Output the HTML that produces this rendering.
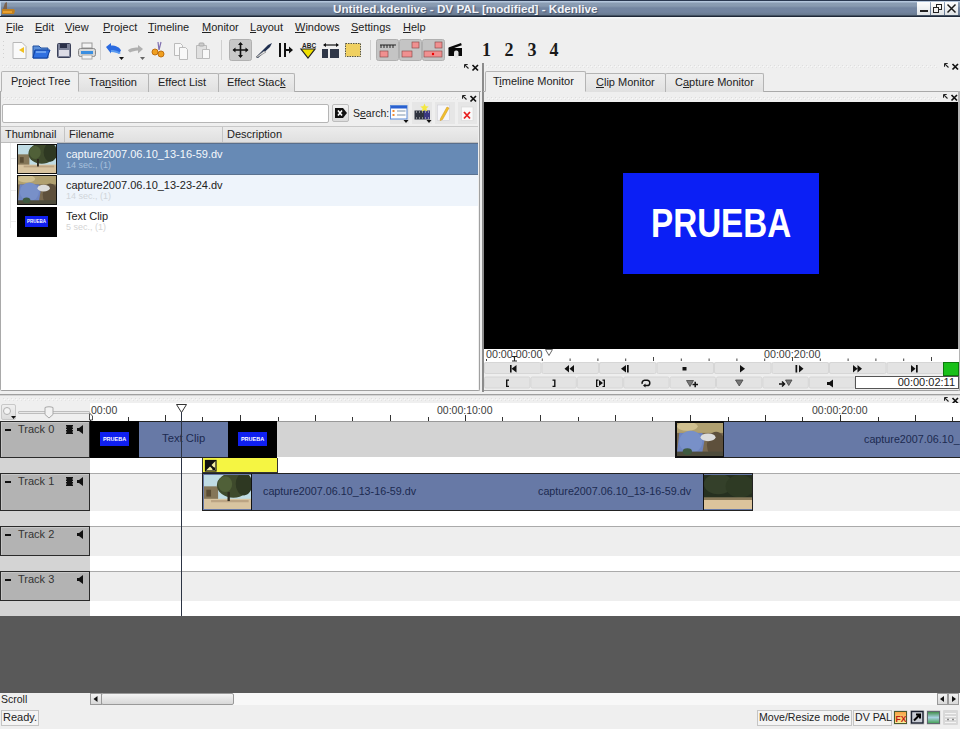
<!DOCTYPE html>
<html><head><meta charset="utf-8">
<style>
*{margin:0;padding:0;box-sizing:border-box}
html,body{width:960px;height:729px;overflow:hidden;background:#efefef;font-family:"Liberation Sans",sans-serif;font-size:11px;color:#222}
.a{position:absolute}
.t{position:absolute;white-space:nowrap;line-height:1}
#title{left:0;top:0;width:960px;height:17px;background:linear-gradient(#2a3850 0,#2a3850 1px,#b4c6dc 1px,#b4c6dc 2px,#8b9db3 3px,#889ab0 6px,#7385a0 8px,#7284a0 12px,#687a8e 15px,#1e2838 16px)}
.wb{position:absolute;top:2px;width:13px;height:13px;background:linear-gradient(#fdfdfd,#dfe3e6);}
.dots{position:absolute;height:5px;background-image:linear-gradient(90deg,#dedede 1px,transparent 1px),linear-gradient(90deg,#fafafa 1px,transparent 1px),linear-gradient(90deg,#e2e2e2 1px,transparent 1px);background-size:4px 1px,4px 1px,4px 1px;background-position:0 1px,1px 2px,2px 3px;background-repeat:repeat-x}
.tab{position:absolute;border:1px solid #b4b4b4;border-bottom:none;border-radius:2px 2px 0 0;background:linear-gradient(#eeeeee,#e0e0e0)}
.tabsel{background:#efefef}
.tbtn{position:absolute;border:1px solid #bdbdbd;border-radius:2px;background:linear-gradient(#f3f3f3,#dcdcdc)}
.tick{position:absolute;width:1px;background:#444}
</style></head><body>
<svg width="0" height="0" style="position:absolute">
<defs>
<symbol id="th1" viewBox="0 0 40 30" preserveAspectRatio="none">
<rect width="40" height="30" fill="#c0dce4"/>
<rect x="0" y="10" width="12" height="12" fill="#857658"/>
<rect x="2" y="13" width="4" height="6" fill="#5a4c34"/>
<ellipse cx="25" cy="9" rx="14" ry="11" fill="#3e4a2c"/>
<ellipse cx="18" cy="8" rx="6" ry="7" fill="#506038"/>
<ellipse cx="34" cy="8" rx="7" ry="10" fill="#2e3822"/>
<rect x="0" y="21" width="40" height="9" fill="#d8c4a0"/>
<path d="M6 22h32v2h-32z" fill="#a89070" opacity="0.6"/>
<rect x="20" y="15" width="2" height="8" fill="#2e2a1e"/>
</symbol>
<symbol id="th2" viewBox="0 0 40 30" preserveAspectRatio="none">
<rect width="40" height="30" fill="#7a6a50"/>
<rect x="0" y="0" width="40" height="9" fill="#b0a070"/>
<ellipse cx="9" cy="3" rx="9" ry="4" fill="#d0c090"/>
<ellipse cx="34" cy="20" rx="8" ry="12" fill="#5e503c"/>
<path d="M2 9h20l2 6-2 12h-22z" fill="#6e84c0"/>
<ellipse cx="12" cy="17" rx="10" ry="10" fill="#7890c8"/>
<ellipse cx="27" cy="13" rx="6.5" ry="3.5" fill="#dcdcdc"/>
<rect x="0" y="26" width="40" height="4" fill="#4e4c3c"/>
<ellipse cx="9" cy="26" rx="4" ry="3" fill="#3e5a40"/>
</symbol>
<symbol id="th3" viewBox="0 0 40 30" preserveAspectRatio="none">
<rect width="40" height="30" fill="#263020"/>
<ellipse cx="12" cy="8" rx="12" ry="9" fill="#34402a"/>
<ellipse cx="30" cy="10" rx="12" ry="10" fill="#2e3a24"/>
<rect x="0" y="20" width="40" height="10" fill="#dcc49c"/>
<path d="M0 20h40v2h-40z" fill="#8a7a5a"/>
</symbol>
</defs></svg>
<!-- title bar -->
<div id="title" class="a"></div>
<div class="a" style="left:0;top:1px;width:1px;height:15px;background:#b8d0e8"></div>
<svg class="a" style="left:0;top:0" width="18" height="17"><path d="M3 9l2-6 2-1v7z" fill="#7a5a40" opacity="0.85"/><path d="M2 9h7l5 0 1 2-1 3h-12z" fill="#c08020"/><path d="M3 12h9" stroke="#e8a030" stroke-width="2"/></svg>
<div class="t" style="left:333px;top:3px;color:#f2f4f8;font-weight:bold;font-size:11.7px;text-shadow:1px 1px 1px rgba(20,30,50,0.45)">Untitled.kdenlive - DV PAL [modified] - Kdenlive</div>
<div class="wb" style="left:917px"><div class="a" style="left:3px;top:8px;width:8px;height:2px;background:#222"></div></div>
<div class="wb" style="left:931px"><div class="a" style="left:5px;top:2px;width:6px;height:6px;border:1px solid #222"></div><div class="a" style="left:2px;top:5px;width:6px;height:6px;border:1px solid #222;background:#f0f0f0"></div></div>
<div class="wb" style="left:945px"></div><svg class="a" style="left:945px;top:2px" width="13" height="13"><path d="M2.5 2.5l8 8M10.5 2.5l-8 8" stroke="#1a1a1a" stroke-width="1.5"/></svg>

<div class="a" style="left:0;top:17px;width:960px;height:2px;background:linear-gradient(#f8fafc,#f0f1f2)"></div>
<!-- menu -->
<div class="t" style="left:6px;top:22px;font-size:11px"><u>F</u>ile</div>
<div class="t" style="left:35px;top:22px"><u>E</u>dit</div>
<div class="t" style="left:65px;top:22px"><u>V</u>iew</div>
<div class="t" style="left:103px;top:22px"><u>P</u>roject</div>
<div class="t" style="left:148px;top:22px"><u>T</u>imeline</div>
<div class="t" style="left:202px;top:22px"><u>M</u>onitor</div>
<div class="t" style="left:250px;top:22px"><u>L</u>ayout</div>
<div class="t" style="left:295px;top:22px"><u>W</u>indows</div>
<div class="t" style="left:351px;top:22px"><u>S</u>ettings</div>
<div class="t" style="left:403px;top:22px"><u>H</u>elp</div>

<!-- toolbar placeholder -->
<svg class="a" style="left:0;top:36px" width="580" height="28" viewBox="0 36 580 28">
<!-- handle dots -->
<g fill="#d0d0d0"><rect x="3" y="41" width="1" height="1"/><rect x="3" y="45" width="1" height="1"/><rect x="3" y="49" width="1" height="1"/><rect x="3" y="53" width="1" height="1"/><rect x="3" y="57" width="1" height="1"/></g>
<!-- new -->
<path d="M13 42.5h9l4 4v12h-13z" fill="#fafafa" stroke="#b8b8b8"/>
<path d="M19 50l5-3v6z" fill="#f0c020"/>
<!-- open -->
<path d="M33 46h6l2 2h7v10h-15z" fill="#5b8fd8" stroke="#2050a0"/>
<path d="M35 50h15l-3 8h-14z" fill="#3070e0" stroke="#1040a0"/>
<path d="M36 52h10" stroke="#a8d0ff"/>
<!-- save -->
<rect x="57.5" y="43.5" width="13" height="14" rx="1" fill="#7c8298" stroke="#3a4058"/>
<rect x="60" y="44" width="7" height="4" fill="#2a3048"/>
<rect x="59" y="50" width="10" height="6" fill="#dcdce6"/>
<!-- print -->
<rect x="82" y="43" width="10" height="5" fill="#f4f4f4" stroke="#999"/>
<rect x="78.5" y="48.5" width="17" height="8" rx="2" fill="#d8d8d8" stroke="#888"/>
<rect x="81" y="51" width="12" height="3" fill="#3a8ee0"/>
<rect x="82" y="55" width="10" height="4" fill="#f4f4f4" stroke="#aaa"/>
<!-- sep -->
<rect x="100" y="40" width="1" height="20" fill="#cfcfcf"/>
<!-- undo -->
<path d="M106 47l5-4v2.5c5 0 9 2 10 5l-2 3c-2-2-5-3-8-3v3z" fill="#2a6ae0"/>
<path d="M111 50c4 0 7 1 10 3l-2 1c-2-1-4-2-8-2z" fill="#5a9af0"/>
<path d="M119 57h5l-2.5 3z" fill="#111"/>
<!-- redo -->
<path d="M143 49l-5-4v2.5c-5 0-9 1-10 3l2 2c2-1 5-2 8-2v3z" fill="#b0b0b0"/>
<path d="M140 57h5l-2.5 3z" fill="#666"/>
<!-- cut -->
<path d="M158 42l1 8M161 42l-2 8" stroke="#8070b0" stroke-width="1.2"/>
<circle cx="155" cy="52" r="3" fill="#f0a020" stroke="#c07010"/>
<circle cx="161" cy="54" r="3" fill="#f0a020" stroke="#c07010"/>
<!-- copy -->
<path d="M174.5 43.5h6l2 2v10h-8z" fill="#f8f8f8" stroke="#bbb"/>
<path d="M179.5 47.5h6l2 2v10h-8z" fill="#f8f8f8" stroke="#bbb"/>
<!-- paste -->
<path d="M196.5 45.5h10v13h-10z" fill="#e0e0e0" stroke="#bbb"/>
<rect x="199" y="43" width="5" height="3" rx="1" fill="#ccc" stroke="#aaa"/>
<path d="M202.5 49.5h7v9h-7z" fill="#f8f8f8" stroke="#bbb"/>
<!-- sep -->
<rect x="221" y="40" width="1" height="20" fill="#cfcfcf"/>
<!-- move pressed -->
<rect x="229.5" y="39.5" width="22" height="21" rx="2" fill="#c8c8c8" stroke="#b0b0b0"/>
<path d="M240.5 43v14M233.5 50h14" stroke="#111" stroke-width="1.6"/>
<path d="M240.5 42l-2.5 3h5zM240.5 58l-2.5-3h5zM232.5 50l3-2.5v5zM248.5 50l-3-2.5v5z" fill="#111"/>
<!-- razor -->
<path d="M256 57l12-12 4-2-2 4-12 11z" fill="#203050"/>
<path d="M256 57l8-6 2 1-8 5z" fill="#e8e8e8" stroke="#666" stroke-width="0.5"/>
<!-- split -->
<rect x="279" y="43" width="2" height="14" fill="#111"/>
<rect x="284" y="43" width="2" height="14" fill="#111"/>
<path d="M286 49h3v-2.5l4 3.5-4 3.5v-2.5h-3z" fill="#111"/>
<!-- abc marker -->
<text x="302" y="47.5" font-family="Liberation Sans" font-weight="bold" font-size="6.5" fill="#222">ABC</text>
<path d="M301 49h14l-7 9z" fill="#f0e000" stroke="#222" stroke-width="1.2"/>
<!-- spacer -->
<path d="M324 45h14" stroke="#111" stroke-width="1.2"/>
<path d="M323 45l3-2v4zM339 45l-3-2v4z" fill="#111"/>
<rect x="322" y="49" width="6" height="9" fill="#303848"/>
<rect x="330" y="49" width="9" height="9" fill="#303848"/>
<!-- rect -->
<rect x="345.5" y="43.5" width="15" height="13" fill="#f0d060" stroke="#554" stroke-dasharray="1.5 1"/>
<!-- sep -->
<rect x="370" y="40" width="1" height="20" fill="#cfcfcf"/>
<!-- pressed 3 -->
<rect x="376.5" y="39.5" width="22" height="21" rx="2" fill="#c4c4c4" stroke="#b0b0b0"/>
<rect x="399.5" y="39.5" width="22" height="21" rx="2" fill="#c4c4c4" stroke="#b0b0b0"/>
<rect x="422.5" y="39.5" width="22" height="21" rx="2" fill="#c4c4c4" stroke="#b0b0b0"/>
<path d="M380 45h16" stroke="#222" stroke-width="1"/>
<path d="M381 45v3M384 45v3M387 45v3M390 45v3M393 45v3" stroke="#222"/>
<rect x="380" y="51" width="8" height="6" fill="#f09090" stroke="#804040" stroke-width="0.6"/>
<rect x="412" y="42" width="7" height="6" fill="#f09090" stroke="#804040" stroke-width="0.6"/>
<rect x="402" y="51" width="10" height="6" fill="#f09090" stroke="#804040" stroke-width="0.6"/>
<rect x="435" y="42" width="7" height="6" fill="#f09090" stroke="#804040" stroke-width="0.6"/>
<rect x="424" y="51" width="18" height="6" fill="#f09090" stroke="#804040" stroke-width="0.6"/>
<circle cx="433" cy="54" r="1.2" fill="#e00"/>
<!-- black icon -->
<path d="M448.5 47.5l12.5-4.5 0.8 2.2-12.5 4.5z" fill="#0a0a0a"/>
<rect x="448.5" y="48" width="13.5" height="8" fill="#0a0a0a"/>
<rect x="454" y="50.5" width="4.5" height="7.5" rx="2" fill="#e4e4e4"/>
<!-- 1234 -->
<g font-family="Liberation Serif" font-size="18" font-weight="bold" fill="#1a1a1a">
<text x="482" y="56">1</text><text x="504.5" y="56">2</text><text x="527.5" y="56">3</text><text x="549.5" y="56">4</text></g>
</svg>

<!-- left dock -->
<div class="dots" style="left:2px;top:64px;width:455px"></div>
<svg class="a" style="left:464px;top:64px" width="16" height="8"><path d="M0.5 0.5h3.2M0.5 0.5v3.2M0.8 0.8l3.7 3.7" stroke="#222" stroke-width="1.1" fill="none"/><path d="M8.5 1l5.5 5.5M14 1l-5.5 5.5" stroke="#111" stroke-width="1.7"/></svg>

<div class="a" style="left:0;top:91px;width:481px;height:1px;background:#a9a9a9"></div>
<div class="tab" style="left:78px;top:73px;width:71px;height:19px"></div>
<div class="tab" style="left:148px;top:73px;width:71px;height:19px"></div>
<div class="tab" style="left:218px;top:73px;width:77px;height:19px"></div>
<div class="tab tabsel" style="left:1px;top:71px;width:78px;height:21px;border-bottom:1px solid #efefef"></div>
<div class="t" style="left:11px;top:76px">P<u>r</u>oject Tree</div>
<div class="t" style="left:89px;top:77px">Tra<u>n</u>sition</div>
<div class="t" style="left:158px;top:77px">Effect List</div>
<div class="t" style="left:227px;top:77px">Effect Stac<u>k</u></div>


<!-- left panel content -->
<div class="a" style="left:0;top:92px;width:480px;height:299px;background:#efefef;border-left:1px solid #a9a9a9;border-right:1px solid #a0a0a0;border-bottom:1px solid #a0a0a0;border-radius:0 0 2px 2px"></div>
<div class="dots" style="left:3px;top:96px;width:455px"></div>
<svg class="a" style="left:462px;top:95px" width="16" height="8"><path d="M0.5 0.5h3.2M0.5 0.5v3.2M0.8 0.8l3.7 3.7" stroke="#222" stroke-width="1.1" fill="none"/><path d="M8.5 1l5.5 5.5M14 1l-5.5 5.5" stroke="#111" stroke-width="1.7"/></svg>
<div class="a" style="left:2px;top:104px;width:327px;height:19px;background:#fff;border:1px solid #b5b5b5;border-radius:2px"></div>
<div class="tbtn" style="left:332px;top:104px;width:17px;height:18px"></div>
<svg class="a" style="left:333px;top:106px" width="16" height="14"><path d="M2 2h8l4 5-4 5h-8z" fill="#111"/><path d="M5 4.5l4 5M9 4.5l-4 5" stroke="#fff" stroke-width="1.6"/></svg>
<div class="t" style="left:353px;top:108px;font-size:10.5px">S<u>e</u>arch:</div>
<svg class="a" style="left:388px;top:101px" width="90" height="24" viewBox="388 101 90 24">
<rect x="390" y="102" width="19" height="22" fill="#e6e6e6"/><rect x="412" y="102" width="20" height="22" fill="#e6e6e6"/><rect x="435" y="102" width="20" height="22" fill="#e6e6e6"/><rect x="458" y="102" width="19" height="22" fill="#e6e6e6"/>
<rect x="390.5" y="105.5" width="16.5" height="13.5" fill="#fdfdfd" stroke="#5a8ad8"/>
<rect x="391" y="106" width="16" height="2.5" fill="#2a60d0"/>
<rect x="392.5" y="110" width="2" height="2" fill="#f08a30"/><rect x="392.5" y="114" width="2" height="2" fill="#f08a30"/>
<path d="M397 111h8.5M397 115h8.5" stroke="#a8b8c8" stroke-width="1.6"/>
<path d="M403.5 120h5l-2.5 3z" fill="#111"/>
<rect x="414.5" y="110.5" width="15.5" height="9" fill="#303440"/>
<rect x="424" y="111" width="6" height="8" fill="#3a3880"/>
<path d="M416 112h1M419 112h1M422 112h1M425 112h1M428 112h1M416 118h1M419 118h1M422 118h1M425 118h1M428 118h1" stroke="#d8d8d8"/>
<path d="M424.5 103.5l1.2 2.8 3 .2-2.3 2 .8 3-2.7-1.6-2.7 1.6.8-3-2.3-2 3-.2z" fill="#f4e840"/>
<path d="M426.5 120h5l-2.5 3z" fill="#111"/>
<rect x="437.5" y="105" width="12" height="15.5" fill="#f6f6fa" stroke="#d0d0d8" stroke-width="0.6"/>
<path d="M440.5 118.5l6.5-11.5 2 1.1-6.5 11.5-2.3 1z" fill="#f0c030" stroke="#d09010" stroke-width="0.5"/>
<rect x="461.5" y="107" width="11.5" height="13.5" fill="#fafafa" stroke="#d8d8d8" stroke-width="0.6"/>
<path d="M464 112l6 6.5M470 112l-6 6.5" stroke="#e82020" stroke-width="1.8"/>
</svg>
<!-- header -->
<div class="a" style="left:1px;top:126px;width:477px;height:17px;background:linear-gradient(#ececec,#e0e0e0);border-top:1px solid #c8c8c8;border-bottom:1px solid #bdbdbd"></div>
<div class="a" style="left:64px;top:127px;width:1px;height:15px;background:#c4c4c4"></div>
<div class="a" style="left:222px;top:127px;width:1px;height:15px;background:#c4c4c4"></div>
<div class="t" style="left:5px;top:129px">Thumbnail</div>
<div class="t" style="left:69px;top:129px">Filename</div>
<div class="t" style="left:227px;top:129px">Description</div>
<!-- list -->
<div class="a" style="left:1px;top:143px;width:477px;height:247px;background:#fff"></div>
<div class="a" style="left:57px;top:143px;width:421px;height:32px;background:#678ab5;border-top:1px solid #5a6f8c;border-bottom:1px solid #5a7290"></div>
<div class="a" style="left:57px;top:175px;width:421px;height:31px;background:#eef4fb"></div>
<div class="a" style="left:10px;top:143px;width:1px;height:85px;background:#ececec"></div><div class="a" style="left:10px;top:158px;width:6px;height:1px;background:#ececec"></div><div class="a" style="left:10px;top:190px;width:6px;height:1px;background:#ececec"></div><div class="a" style="left:10px;top:221px;width:6px;height:1px;background:#ececec"></div>
<div class="a" style="left:17px;top:144px;width:40px;height:30px;background:#111"></div>
<svg class="a" style="left:18px;top:145px" width="38" height="28"><use href="#th1" width="38" height="28"/></svg>
<div class="a" style="left:17px;top:175px;width:40px;height:30px;background:#111"></div>
<svg class="a" style="left:18px;top:176px" width="38" height="28"><use href="#th2" width="38" height="28"/></svg>
<div class="a" style="left:17px;top:207px;width:40px;height:30px;background:#000"></div>
<div class="a" style="left:25px;top:216px;width:23px;height:11px;background:#1020f0;color:#fff;font-size:4.5px;font-weight:bold;text-align:center;line-height:11px">PRUEBA</div>
<div class="t" style="left:66px;top:149px;color:#f4f8fc">capture2007.06.10_13-16-59.dv</div>
<div class="t" style="left:66px;top:161px;color:#a8c0dc;font-size:9px">14 sec., (1)</div>
<div class="t" style="left:66px;top:180px;color:#222">capture2007.06.10_13-23-24.dv</div>
<div class="t" style="left:66px;top:192px;color:#d0d4da;font-size:9px">14 sec., (1)</div>
<div class="t" style="left:66px;top:211px;color:#222">Text Clip</div>
<div class="t" style="left:66px;top:223px;color:#d4d4d4;font-size:9px">5 sec., (1)</div>


<!-- right dock -->
<div class="a" style="left:482px;top:63px;width:2px;height:329px;background:#8c8c8c"></div>
<div class="dots" style="left:486px;top:64px;width:452px"></div>
<svg class="a" style="left:944px;top:63px" width="16" height="8"><path d="M0.5 0.5h3.2M0.5 0.5v3.2M0.8 0.8l3.7 3.7" stroke="#222" stroke-width="1.1" fill="none"/><path d="M8.5 1l5.5 5.5M14 1l-5.5 5.5" stroke="#111" stroke-width="1.7"/></svg>
<div class="a" style="left:483px;top:91px;width:477px;height:1px;background:#a9a9a9"></div>
<div class="tab" style="left:585px;top:73px;width:81px;height:19px"></div>
<div class="tab" style="left:665px;top:73px;width:99px;height:19px"></div>
<div class="tab tabsel" style="left:485px;top:71px;width:101px;height:21px;border-bottom:1px solid #efefef"></div>
<div class="t" style="left:493px;top:76px">T<u>i</u>meline Monitor</div>
<div class="t" style="left:596px;top:77px"><u>C</u>lip Monitor</div>
<div class="t" style="left:675px;top:77px">C<u>a</u>pture Monitor</div>
<div class="a" style="left:484px;top:92px;width:476px;height:299px;border-bottom:1px solid #a0a0a0"></div>
<div class="dots" style="left:487px;top:96px;width:450px"></div>
<svg class="a" style="left:943px;top:94px" width="16" height="8"><path d="M0.5 0.5h3.2M0.5 0.5v3.2M0.8 0.8l3.7 3.7" stroke="#222" stroke-width="1.1" fill="none"/><path d="M8.5 1l5.5 5.5M14 1l-5.5 5.5" stroke="#111" stroke-width="1.7"/></svg>
<div class="a" style="left:484px;top:102px;width:474px;height:247px;background:#000"></div><div class="a" style="left:958px;top:91px;width:2px;height:300px;background:#b4b4b4"></div>
<div class="a" style="left:623px;top:173px;width:196px;height:101px;background:#0b1ff5"></div>
<div class="t" style="left:651px;top:203px;color:#fff;font-weight:bold;font-size:41px;transform:scaleX(0.81);transform-origin:0 0;letter-spacing:0px">PRUEBA</div>
<!-- monitor ruler -->
<svg class="a" style="left:483px;top:349px" width="477" height="43" viewBox="483 349 477 43">
<rect x="484" y="349" width="475" height="13" fill="#fff"/>
<rect x="484" y="362" width="475" height="28" fill="#eeeeee"/>
<text x="486" y="357.8" font-family="Liberation Sans" font-size="10.7" fill="#3c3c3c">00:00:00:00</text>
<text x="764" y="357.8" font-family="Liberation Sans" font-size="10.7" fill="#3c3c3c">00:00:20:00</text>
<rect x="486" y="359" width="1" height="2" fill="#444"/>
<rect x="541.8" y="358.5" width="1" height="2.5" fill="#444"/><rect x="569.6" y="358.5" width="1" height="2.5" fill="#444"/><rect x="597.4" y="358.5" width="1" height="2.5" fill="#444"/><rect x="625.2" y="358.5" width="1" height="2.5" fill="#444"/><rect x="653.0" y="357" width="1" height="4" fill="#444"/><rect x="680.8" y="358.5" width="1" height="2.5" fill="#444"/><rect x="708.6" y="358.5" width="1" height="2.5" fill="#444"/><rect x="736.4" y="358.5" width="1" height="2.5" fill="#444"/><rect x="764.2" y="358.5" width="1" height="2.5" fill="#444"/><rect x="792.0" y="357" width="1" height="4" fill="#444"/><rect x="819.8" y="358.5" width="1" height="2.5" fill="#444"/><rect x="847.6" y="358.5" width="1" height="2.5" fill="#444"/><rect x="875.4" y="358.5" width="1" height="2.5" fill="#444"/><rect x="903.2" y="358.5" width="1" height="2.5" fill="#444"/><rect x="931.0" y="357" width="1" height="4" fill="#444"/>
<path d="M545.5 349.5h7l-3.5 6z" fill="#fff" stroke="#666"/>
<path d="M512 356.5h5M514.5 356.5v4.5M512 361h5" stroke="#222" stroke-width="1.1"/>
<rect x="484.5" y="362.5" width="56.5" height="11" rx="1.5" fill="#e3e3e3" stroke="#d6d6d6"/><rect x="542.0" y="362.5" width="56.5" height="11" rx="1.5" fill="#e3e3e3" stroke="#d6d6d6"/><rect x="599.5" y="362.5" width="56.5" height="11" rx="1.5" fill="#e3e3e3" stroke="#d6d6d6"/><rect x="657.0" y="362.5" width="56.5" height="11" rx="1.5" fill="#e3e3e3" stroke="#d6d6d6"/><rect x="714.5" y="362.5" width="56.5" height="11" rx="1.5" fill="#e3e3e3" stroke="#d6d6d6"/><rect x="772.0" y="362.5" width="56.5" height="11" rx="1.5" fill="#e3e3e3" stroke="#d6d6d6"/><rect x="829.5" y="362.5" width="56.5" height="11" rx="1.5" fill="#e3e3e3" stroke="#d6d6d6"/><rect x="887.0" y="362.5" width="56.5" height="11" rx="1.5" fill="#e3e3e3" stroke="#d6d6d6"/>
<rect x="484.5" y="377" width="45.4" height="11" rx="1.5" fill="#e3e3e3" stroke="#d6d6d6"/><rect x="530.9" y="377" width="45.4" height="11" rx="1.5" fill="#e3e3e3" stroke="#d6d6d6"/><rect x="577.3" y="377" width="45.4" height="11" rx="1.5" fill="#e3e3e3" stroke="#d6d6d6"/><rect x="623.7" y="377" width="45.4" height="11" rx="1.5" fill="#e3e3e3" stroke="#d6d6d6"/><rect x="670.1" y="377" width="45.4" height="11" rx="1.5" fill="#e3e3e3" stroke="#d6d6d6"/><rect x="716.5" y="377" width="45.4" height="11" rx="1.5" fill="#e3e3e3" stroke="#d6d6d6"/><rect x="762.9" y="377" width="45.4" height="11" rx="1.5" fill="#e3e3e3" stroke="#d6d6d6"/><rect x="809.3" y="377" width="45.4" height="11" rx="1.5" fill="#e3e3e3" stroke="#d6d6d6"/>
<rect x="943.5" y="362.5" width="15" height="13" fill="#19c019" stroke="#0c7a0c"/>
<rect x="855.5" y="376.5" width="103" height="12" fill="#fff" stroke="#555"/>
<text x="955" y="386.3" text-anchor="end" font-family="Liberation Sans" font-size="11" fill="#222">00:00:02:11</text>
<g fill="#111">
<rect x="510" y="365" width="1.6" height="7.5"/><path d="M516.5 365v7.5l-5-3.75z"/>
<path d="M569 365v7.5l-4.5-3.75zM574 365v7.5l-4.5-3.75z"/>
<path d="M626 365v7.5l-5-3.75z"/><rect x="627" y="365" width="1.7" height="7.5"/>
<rect x="682.5" y="367" width="4" height="3.5"/>
<path d="M740 365v7.5l5-3.75z"/>
<rect x="795.5" y="365" width="1.7" height="7.5"/><path d="M799 365v7.5l4.5-3.75z"/>
<path d="M853 365v7.5l4.5-3.75zM857.5 365v7.5l4.5-3.75z"/>
<path d="M911 365v7.5l4.5-3.75z"/><rect x="916" y="365" width="1.7" height="7.5"/>
<path d="M506 379.5h3v1.3h-1.6v5h1.6v1.3h-3z"/>
<path d="M555.5 379.5h-3v1.3h1.6v5h-1.6v1.3h3z"/>
<path d="M596 379.5h2.5v1.2h-1.2v5.2h1.2v1.2h-2.5zM605 379.5h-2.5v1.2h1.2v5.2h-1.2v1.2h2.5zM599 380v6l4-3z"/>
<path d="M643 385.5l2.5-2v4z"/>
</g>
<path d="M645 385.5h2.2a2.6 2.6 0 0 0 0-5.2h-2.6a2.6 2.6 0 0 0-2.3 3.6" stroke="#111" stroke-width="1.5" fill="none"/>
<path d="M686.5 380.5h7l-3.5 6z" fill="#777" stroke="#444" stroke-width="0.8"/>
<path d="M692.5 384.5h5.5M695.2 381.8v5.5" stroke="#111" stroke-width="1.5"/>
<path d="M735.5 380h7.5l-3.75 6z" fill="#777" stroke="#444" stroke-width="0.8"/>
<path d="M785.5 380h6.5l-3.25 5.5z" fill="#777" stroke="#444" stroke-width="0.8"/>
<path d="M779 384h5M782 381.5l2.5 2.5-2.5 2.5" stroke="#111" stroke-width="1.5" fill="none"/>
<path d="M827 382h2.5l3.5-2.5v8l-3.5-2.5h-2.5z" fill="#111"/>
</svg>

<!-- timeline dock -->
<div class="a" style="left:0;top:394px;width:960px;height:1px;background:#a0a0a0"></div><div class="a" style="left:0;top:395px;width:960px;height:1px;background:#d4d4d4"></div>
<div class="dots" style="left:3px;top:397px;width:935px"></div>
<svg class="a" style="left:944px;top:397px" width="16" height="8"><path d="M0.5 0.5h3.2M0.5 0.5v3.2M0.8 0.8l3.7 3.7" stroke="#222" stroke-width="1.1" fill="none"/><path d="M8.5 1l5.5 5.5M14 1l-5.5 5.5" stroke="#111" stroke-width="1.7"/></svg>
<!-- ruler -->
<div class="a" style="left:90px;top:403px;width:870px;height:18px;background:#fff"></div>
<div class="a" style="left:90px;top:421px;width:870px;height:1px;background:#999"></div>
<div class="tick" style="left:90px;top:415px;height:6px;background:#333"></div><div class="tick" style="left:128px;top:417px;height:4px;background:#333"></div><div class="tick" style="left:165px;top:415px;height:6px;background:#333"></div><div class="tick" style="left:202px;top:417px;height:4px;background:#333"></div><div class="tick" style="left:240px;top:415px;height:6px;background:#333"></div><div class="tick" style="left:278px;top:417px;height:4px;background:#333"></div><div class="tick" style="left:315px;top:415px;height:6px;background:#333"></div><div class="tick" style="left:352px;top:417px;height:4px;background:#333"></div><div class="tick" style="left:390px;top:415px;height:6px;background:#333"></div><div class="tick" style="left:428px;top:417px;height:4px;background:#333"></div><div class="tick" style="left:465px;top:415px;height:6px;background:#333"></div><div class="tick" style="left:502px;top:417px;height:4px;background:#333"></div><div class="tick" style="left:540px;top:415px;height:6px;background:#333"></div><div class="tick" style="left:578px;top:417px;height:4px;background:#333"></div><div class="tick" style="left:615px;top:415px;height:6px;background:#333"></div><div class="tick" style="left:652px;top:417px;height:4px;background:#333"></div><div class="tick" style="left:690px;top:415px;height:6px;background:#333"></div><div class="tick" style="left:728px;top:417px;height:4px;background:#333"></div><div class="tick" style="left:765px;top:415px;height:6px;background:#333"></div><div class="tick" style="left:802px;top:417px;height:4px;background:#333"></div><div class="tick" style="left:840px;top:415px;height:6px;background:#333"></div><div class="tick" style="left:878px;top:417px;height:4px;background:#333"></div><div class="tick" style="left:915px;top:415px;height:6px;background:#333"></div><div class="tick" style="left:952px;top:417px;height:4px;background:#333"></div>
<div class="t" style="left:91px;top:405px;font-size:10.5px;color:#3a3a3a">00:00</div>
<div class="t" style="left:437px;top:405px;font-size:10.5px;color:#3a3a3a">00:00:10:00</div>
<div class="t" style="left:812px;top:405px;font-size:10.5px;color:#3a3a3a">00:00:20:00</div>
<svg class="a" style="left:175px;top:403px" width="14" height="10"><path d="M1.5 1.5h10l-5 8z" fill="#fff" stroke="#333"/></svg>
<svg class="a" style="left:88px;top:412px" width="6" height="9"><path d="M1.5 1v7h3v-4z" fill="#fff" stroke="#222" stroke-width="0.8"/></svg>
<!-- zoom controls -->
<div class="a" style="left:1px;top:404px;width:15px;height:16px;background:linear-gradient(#f0f0f0,#dcdcdc);border:1px solid #c8c8c8;border-radius:2px"></div>
<svg class="a" style="left:1px;top:404px" width="16" height="17"><circle cx="6" cy="7" r="3.5" fill="#f4f4f4" stroke="#b0b0b0"/><path d="M10 12h5l-2.5 3z" fill="#111"/></svg>
<div class="a" style="left:18px;top:411px;width:72px;height:3px;background:#e8e8e8;border:1px solid #bdbdbd;border-radius:1px"></div>
<svg class="a" style="left:44px;top:406px" width="10" height="13"><path d="M1 1.5c2.5-1 5.5-1 8 0v7l-4 3.5-4-3.5z" fill="#f2f2f2" stroke="#a8a8a8"/></svg>
<!-- left column backgrounds -->
<div class="a" style="left:0;top:421px;width:90px;height:195px;background:#d4d4d4"></div>
<!-- track rows -->
<div class="a" style="left:90px;top:422px;width:870px;height:35px;background:#d3d3d3"></div>
<div class="a" style="left:90px;top:457px;width:870px;height:16px;background:#fff"></div>
<div class="a" style="left:90px;top:473px;width:870px;height:1px;background:#aaa"></div>
<div class="a" style="left:90px;top:474px;width:870px;height:37px;background:#eeeeee"></div>
<div class="a" style="left:90px;top:511px;width:870px;height:15px;background:#fff"></div>
<div class="a" style="left:90px;top:526px;width:870px;height:1px;background:#aaa"></div>
<div class="a" style="left:90px;top:527px;width:870px;height:29px;background:#eeeeee"></div>
<div class="a" style="left:90px;top:556px;width:870px;height:15px;background:#fff"></div>
<div class="a" style="left:90px;top:571px;width:870px;height:1px;background:#aaa"></div>
<div class="a" style="left:90px;top:572px;width:870px;height:29px;background:#eeeeee"></div>
<div class="a" style="left:90px;top:601px;width:870px;height:15px;background:#fff"></div>
<div class="a" style="left:0;top:421px;width:90px;height:37px;background:#b3b3b3;border:1px solid #2a2a2a;box-shadow:inset 1px 1px 0 #c6c6c6"></div><div class="a" style="left:5px;top:429px;width:6px;height:2px;background:#111"></div><div class="t" style="left:18px;top:424px;font-size:11px;color:#333">Track 0</div><svg class="a" style="left:65px;top:424px" width="10" height="11"><rect x="1" y="1" width="7" height="9" fill="#111"/><path d="M1.5 2.5v1M1.5 5v1M1.5 7.5v1M7.5 2.5v1M7.5 5v1M7.5 7.5v1" stroke="#bbb" stroke-width="0.8"/></svg><svg class="a" style="left:76px;top:424px" width="10" height="11"><path d="M1 4h2l4-3v9l-4-3h-2z" fill="#111"/></svg><div class="a" style="left:0;top:473px;width:90px;height:38px;background:#b3b3b3;border:1px solid #2a2a2a;box-shadow:inset 1px 1px 0 #c6c6c6"></div><div class="a" style="left:5px;top:481px;width:6px;height:2px;background:#111"></div><div class="t" style="left:18px;top:476px;font-size:11px;color:#333">Track 1</div><svg class="a" style="left:65px;top:476px" width="10" height="11"><rect x="1" y="1" width="7" height="9" fill="#111"/><path d="M1.5 2.5v1M1.5 5v1M1.5 7.5v1M7.5 2.5v1M7.5 5v1M7.5 7.5v1" stroke="#bbb" stroke-width="0.8"/></svg><svg class="a" style="left:76px;top:476px" width="10" height="11"><path d="M1 4h2l4-3v9l-4-3h-2z" fill="#111"/></svg><div class="a" style="left:0;top:526px;width:90px;height:30px;background:#b3b3b3;border:1px solid #2a2a2a;box-shadow:inset 1px 1px 0 #c6c6c6"></div><div class="a" style="left:5px;top:534px;width:6px;height:2px;background:#111"></div><div class="t" style="left:18px;top:529px;font-size:11px;color:#333">Track 2</div><svg class="a" style="left:76px;top:529px" width="10" height="11"><path d="M1 4h2l4-3v9l-4-3h-2z" fill="#111"/></svg><div class="a" style="left:0;top:571px;width:90px;height:30px;background:#b3b3b3;border:1px solid #2a2a2a;box-shadow:inset 1px 1px 0 #c6c6c6"></div><div class="a" style="left:5px;top:579px;width:6px;height:2px;background:#111"></div><div class="t" style="left:18px;top:574px;font-size:11px;color:#333">Track 3</div><svg class="a" style="left:76px;top:574px" width="10" height="11"><path d="M1 4h2l4-3v9l-4-3h-2z" fill="#111"/></svg>
<!-- track0 clips -->
<div class="a" style="left:90px;top:421px;width:50px;height:37px;background:#000"></div>
<div class="a" style="left:100px;top:432px;width:29px;height:14px;background:#1020f0;color:#fff;font-size:5.5px;font-weight:bold;text-align:center;line-height:14px">PRUEBA</div>
<div class="a" style="left:139px;top:421px;width:90px;height:37px;background:#6779a6;border-top:1px solid #222;border-bottom:1px solid #222"></div>
<div class="t" style="left:162px;top:433px;font-size:11.25px;color:#1c2a50">Text Clip</div>
<div class="a" style="left:228px;top:421px;width:49px;height:37px;background:#000"></div>
<div class="a" style="left:238px;top:432px;width:29px;height:14px;background:#1020f0;color:#fff;font-size:5.5px;font-weight:bold;text-align:center;line-height:14px">PRUEBA</div>
<div class="a" style="left:675px;top:421px;width:50px;height:37px;background:#111"></div>
<svg class="a" style="left:677px;top:423px" width="46" height="33"><use href="#th2" width="46" height="33"/></svg>
<div class="a" style="left:724px;top:421px;width:236px;height:37px;background:#6779a6;border-top:1px solid #222;border-bottom:1px solid #222"></div>
<div class="t" style="left:864px;top:434px;font-size:10.75px;color:#1c2a50">capture2007.06.10_13-23-24.dv</div>
<!-- transition -->
<div class="a" style="left:202px;top:458px;width:76px;height:15px;background:#f5f542;border:1px solid #333;border-top:none"></div>
<svg class="a" style="left:204px;top:459px" width="14" height="13"><rect x="1.5" y="1.5" width="10.5" height="10.5" fill="#f4eea0" stroke="#111" stroke-width="1.2"/><path d="M1.5 1.5h10.5l-10.5 10.5z" fill="#111"/><path d="M6 6l4 4" stroke="#111" stroke-width="2"/><rect x="8.5" y="8.5" width="2.5" height="2.5" fill="#111"/></svg>
<!-- track1 clip -->
<div class="a" style="left:202px;top:473px;width:551px;height:38px;background:#6779a6;border:1px solid #222"></div>
<svg class="a" style="left:204px;top:475px" width="47" height="34"><use href="#th1" width="47" height="34"/></svg>
<svg class="a" style="left:704px;top:475px" width="48" height="34"><use href="#th3" width="48" height="34"/></svg>
<div class="a" style="left:251px;top:474px;width:1px;height:36px;background:#111"></div>
<div class="a" style="left:703px;top:474px;width:1px;height:36px;background:#111"></div>
<div class="t" style="left:263px;top:486px;font-size:10.75px;color:#1c2a50">capture2007.06.10_13-16-59.dv</div>
<div class="t" style="left:538px;top:486px;font-size:10.75px;color:#1c2a50">capture2007.06.10_13-16-59.dv</div>
<!-- playhead -->
<div class="a" style="left:181px;top:412px;width:1px;height:204px;background:#2c3444"></div>
<!-- dark area -->
<div class="a" style="left:0;top:616px;width:960px;height:77px;background:#595959"></div>
<!-- scroll row -->
<div class="a" style="left:90px;top:693px;width:870px;height:12px;background:#f8f8f8"></div>
<div class="t" style="left:1px;top:694px;font-size:10.5px;color:#222">Scroll</div>
<div class="a" style="left:90px;top:693px;width:12px;height:12px;background:linear-gradient(#f2f2f2,#d8d8d8);border:1px solid #999"></div>
<svg class="a" style="left:90px;top:693px" width="12" height="12"><path d="M7.5 3v6l-4-3z" fill="#111"/></svg>
<div class="a" style="left:101px;top:693px;width:133px;height:12px;background:linear-gradient(#f4f4f4,#d8d8d8);border:1px solid #999;border-radius:2px"></div>
<div class="a" style="left:937px;top:693px;width:11px;height:12px;background:linear-gradient(#f2f2f2,#d8d8d8);border:1px solid #999"></div>
<svg class="a" style="left:937px;top:693px" width="11" height="12"><path d="M7 3v6l-4-3z" fill="#111"/></svg>
<div class="a" style="left:948px;top:693px;width:11px;height:12px;background:linear-gradient(#f2f2f2,#d8d8d8);border:1px solid #999"></div>
<svg class="a" style="left:948px;top:693px" width="11" height="12"><path d="M4 3v6l4-3z" fill="#111"/></svg>
<!-- status -->
<div class="a" style="left:0;top:705px;width:960px;height:24px;background:#efefef"></div>
<div class="a" style="left:1px;top:710px;width:38px;height:16px;border:1px solid #c4c4c4;background:#f4f4f4"></div>
<div class="t" style="left:3px;top:712px;font-size:11px;color:#222">Ready.</div>
<div class="a" style="left:757px;top:710px;width:95px;height:16px;border:1px solid #c4c4c4;background:#f4f4f4"></div>
<div class="t" style="left:759px;top:712px;font-size:10.6px;color:#222">Move/Resize mode</div>
<div class="a" style="left:853px;top:710px;width:39px;height:16px;border:1px solid #c4c4c4;background:#f4f4f4"></div>
<div class="t" style="left:855px;top:712px;font-size:10.6px;color:#222">DV PAL</div>
<svg class="a" style="left:893px;top:709px" width="67" height="18" viewBox="893 709 67 18">
<defs><linearGradient id="fxg" x1="0" y1="0" x2="0" y2="1"><stop offset="0" stop-color="#f8a040"/><stop offset="1" stop-color="#f8f0a0"/></linearGradient>
<linearGradient id="picg" x1="0" y1="0" x2="0" y2="1"><stop offset="0" stop-color="#3a8a40"/><stop offset="0.5" stop-color="#a8d0e0"/><stop offset="1" stop-color="#40a050"/></linearGradient></defs>
<rect x="893.5" y="710" width="14" height="15" rx="1" fill="#d8d8d8"/>
<rect x="894.5" y="711.5" width="12" height="12" fill="url(#fxg)" stroke="#4a5a30"/>
<text x="895.5" y="721.5" font-family="Liberation Sans" font-weight="bold" font-size="8.5" fill="#c02010">FX</text>
<rect x="910" y="710" width="14.5" height="15" rx="1" fill="#d0d0d0"/>
<rect x="911.5" y="711.5" width="11.5" height="11.5" fill="#c8ccd4" stroke="#1a2030" stroke-width="1.4"/>
<path d="M914 720.5l5.5-5.5M916 714.5h4v4" stroke="#000" stroke-width="2" fill="none"/>
<rect x="926.5" y="710" width="14" height="15" rx="1" fill="#d0d0d0"/>
<rect x="927.5" y="711.5" width="12" height="12" fill="url(#picg)" stroke="#606870"/>
<rect x="943" y="710" width="15" height="15" rx="1" fill="#d8d8d8"/>
<path d="M945 713.5h11M945 716.5h11M945 719.5h11M945 722.5h11" stroke="#f4f4f4" stroke-width="1.2"/>
<path d="M947 719.5h2M952 719.5h2" stroke="#888" stroke-width="1.5"/>
</svg>

</body></html>
